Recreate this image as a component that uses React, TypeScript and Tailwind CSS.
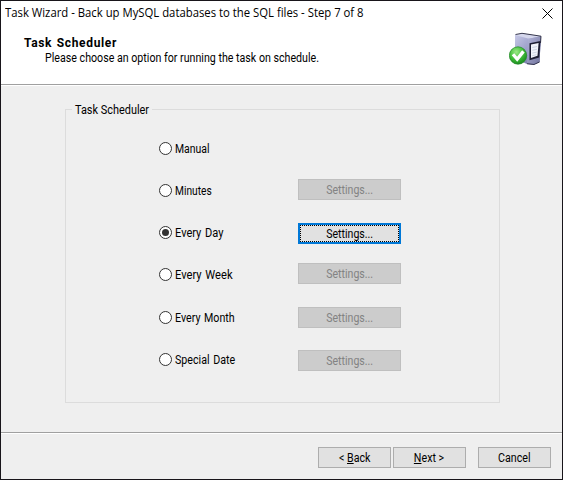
import type { ReactNode } from "react";

const options = [
  { label: "Manual", row: "h-[42px]", text: "scale-x-[0.87]" },
  { label: "Minutes", row: "h-[42px]", text: "scale-x-[0.85]" },
  { label: "Every Day", row: "h-[42px]", text: "scale-x-[0.92] [word-spacing:1px]", checked: true },
  { label: "Every Week", row: "h-[43px]", text: "scale-x-[0.93] [word-spacing:1px]" },
  { label: "Every Month", row: "h-[42px]", text: "scale-x-[0.89] [word-spacing:1px]" },
  { label: "Special Date", row: "h-[13px]", text: "scale-x-[0.89] [word-spacing:1px]" },
];

const settings = [
  { gap: "mb-[23px]", active: false },
  { gap: "mb-[19px]", active: true },
  { gap: "mb-[23px]", active: false },
  { gap: "mb-[22px]", active: false },
  { gap: "", active: false },
];

function Radio({ checked }: { checked?: boolean }) {
  return (
    <span className="flex size-[13px] shrink-0 items-center justify-center rounded-full border border-[#333] bg-white">
      {checked && <span className="size-[7px] rounded-full bg-[#333]" />}
    </span>
  );
}

function SettingsButton({ active, gap }: { active: boolean; gap: string }) {
  if (active) {
    return (
      <button className={`${gap} h-[21px] w-[103px] border-2 border-[#0078d7] bg-[#e1e1e1]`}>
        <span className="flex h-[17px] items-center justify-center border border-dotted border-black">
          <span className="scale-x-[0.88]">Settings...</span>
        </span>
      </button>
    );
  }
  return (
    <button className={`${gap} flex h-[21px] w-[103px] items-center justify-center border border-[#bfbfbf] bg-[#ccc] text-[#838383]`}>
      <span className="scale-x-[0.88]">Settings...</span>
    </button>
  );
}

function FooterButton({ children }: { children: ReactNode }) {
  return (
    <button className="flex h-[21px] w-[73px] items-center justify-center border border-[#adadad] bg-[#e1e1e1]">
      <span className="scale-x-[0.89] whitespace-pre">{children}</span>
    </button>
  );
}

function ServerIcon() {
  return (
    <svg className="mt-[5px] h-[34px] w-[34px]" viewBox="0 0 34 34">
      <defs>
        <linearGradient id="side" x1="0" x2="1" y1="0" y2="1">
          <stop offset="0" stopColor="#c9cbe8" />
          <stop offset=".5" stopColor="#9a9dc8" />
          <stop offset="1" stopColor="#565985" />
        </linearGradient>
        <linearGradient id="front" x1="0" x2="1" y1="0" y2="1">
          <stop offset="0" stopColor="#b4b6da" />
          <stop offset="1" stopColor="#70729c" />
        </linearGradient>
        <radialGradient id="green" cx=".4" cy=".3" r=".75">
          <stop offset="0" stopColor="#9bea86" />
          <stop offset=".55" stopColor="#3fbd38" />
          <stop offset="1" stopColor="#16851b" />
        </radialGradient>
      </defs>
      <path d="M6 4 13 2.3 32 5.2 30.5 31 25 33.5 18 33 6 28Z" fill="url(#side)" />
      <path d="m6 4 7-1.7 19 2.9-12 2.6Z" fill="#d5d7ec" />
      <path d="m19 7.8 13-2.6-1.5 25.8-5.5 2.5-7-.5Z" fill="url(#front)" />
      <path d="M6.5 3.5 13 2.3 32 5.2 31.5 12" fill="none" stroke="#25263b" strokeWidth=".9" />
      <path d="m18 32.7 7 .8 5.5-2.5" fill="none" stroke="#34354f" />
      <path d="m20.5 12.2 11-2.2-1.3 16.5-9.7 2.8Z" fill="#1d1e33" />
      <path d="m22 13.4 7.6-1.5-1.1 12.9-6.5 2.2Z" fill="#f1f3fa" />
      <path d="m23.3 16.5 4.8-1m-4.8 3.8 4.6-1m-4.6 3.8 4.4-1m-4.4 3.6 4.1-1" stroke="#bbc5d8" strokeWidth=".7" />
      <circle cx="9" cy="24.5" r="8.7" fill="url(#green)" stroke="#218626" strokeWidth=".7" />
      <path d="m4 23.2 4.2 5 6.2-7.8" fill="none" stroke="#fff" strokeWidth="3.3" />
    </svg>
  );
}

export default function App() {
  return (
    <div className="flex h-[480px] w-[563px] flex-col border border-[#18151a] bg-[#efefef] font-['Roboto',sans-serif] text-[12px] leading-[14px] text-black">
      <header className="flex h-[85px] shrink-0 flex-col border-b border-white bg-white">
        <div className="flex h-[25px] justify-between pr-[9px] pl-1">
          <h1 className="pt-[4px] font-['Open_Sans',sans-serif] text-[12px] leading-4">
            <span className="inline-block origin-left scale-x-[0.943]">
              Task Wizard - Back up MySQL databases to the SQL files - Step 7 of 8
            </span>
          </h1>
          <svg className="mt-[7px] size-[11px]" viewBox="0 0 11 11">
            <path d="m.5.5 10 10m0-10-10 10" stroke="#000" />
          </svg>
        </div>
        <div className="flex h-[59px] justify-between border-b border-[#a0a0a0] pr-[19px] pl-[23px]">
          <div className="pt-[10px]">
            <h2 className="font-bold tracking-[0.65px] [word-spacing:1px]">Task Scheduler</h2>
            <p className="mt-px origin-left translate-x-[21px] scale-x-[0.888]">
              Please choose an option for running the task on schedule.
            </p>
          </div>
          <ServerIcon />
        </div>
      </header>

      <main className="h-[346px] shrink-0 pt-[16px] pl-[64px]">
        <fieldset className="h-[301px] w-[435px] border border-[#dcdcdc] pl-[93px]">
          <legend className="-ml-[87px] h-[14px] w-[80px] px-[3px]">
            <span className="inline-block origin-left translate-y-px scale-x-[0.91] whitespace-nowrap">Task Scheduler</span>
          </legend>
          <div className="flex pt-[26px]">
            <div className="w-[139px]">
              {options.map((o) => (
                <label key={o.label} className={`${o.row} flex items-start gap-[3px]`}>
                  <Radio checked={o.checked} />
                  <span className={`origin-left ${o.text}`}>{o.label}</span>
                </label>
              ))}
            </div>
            <div className="flex flex-col pt-[37px]">
              {settings.map((s, i) => (
                <SettingsButton key={i} active={s.active} gap={s.gap} />
              ))}
            </div>
          </div>
        </fieldset>
      </main>

      <footer className="flex flex-1 flex-col border-t border-[#a0a0a0]">
        <div className="flex justify-end gap-[2px] border-t border-white pt-[13px] pr-[11px]">
          <FooterButton>{"< "}<u>B</u>ack</FooterButton>
          <FooterButton><u>N</u>{"ext >"}</FooterButton>
          <div className="pl-[10px]">
            <FooterButton>Cancel</FooterButton>
          </div>
        </div>
      </footer>
    </div>
  );
}
